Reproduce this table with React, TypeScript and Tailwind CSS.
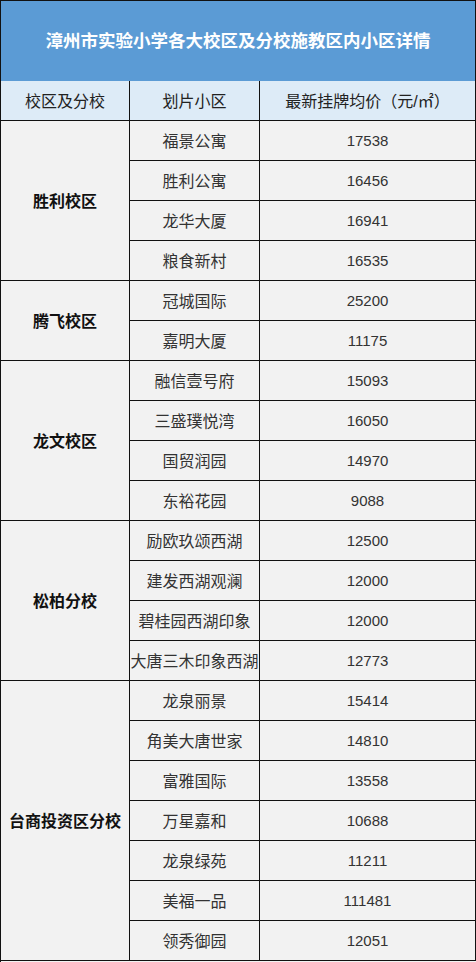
import React from 'react';

type Group = { campus: string; rows: [string, string][] };

const groups: Group[] = [
  {
    campus: '胜利校区',
    rows: [
      ['福景公寓', '17538'],
      ['胜利公寓', '16456'],
      ['龙华大厦', '16941'],
      ['粮食新村', '16535'],
    ],
  },
  {
    campus: '腾飞校区',
    rows: [
      ['冠城国际', '25200'],
      ['嘉明大厦', '11175'],
    ],
  },
  {
    campus: '龙文校区',
    rows: [
      ['融信壹号府', '15093'],
      ['三盛璞悦湾', '16050'],
      ['国贸润园', '14970'],
      ['东裕花园', '9088'],
    ],
  },
  {
    campus: '松柏分校',
    rows: [
      ['励欧玖颂西湖', '12500'],
      ['建发西湖观澜', '12000'],
      ['碧桂园西湖印象', '12000'],
      ['大唐三木印象西湖', '12773'],
    ],
  },
  {
    campus: '台商投资区分校',
    rows: [
      ['龙泉丽景', '15414'],
      ['角美大唐世家', '14810'],
      ['富雅国际', '13558'],
      ['万星嘉和', '10688'],
      ['龙泉绿苑', '11211'],
      ['美福一品', '111481'],
      ['领秀御园', '12051'],
    ],
  },
];

const spanClass: Record<number, string> = {
  2: 'row-span-2',
  4: 'row-span-4',
  7: 'row-span-7',
};

const font = { fontFamily: '"Liberation Sans", "Noto Sans CJK SC", sans-serif' };

export default function App() {
  return (
    <div className="w-[476px] h-[962px] bg-[#f2f2f2] border-l border-t border-[#111]" style={font}>
      {/* Title */}
      <div className="h-[80px] bg-[#5b9bd5] border-r border-[#111] flex items-center justify-center pt-[1px]">
        <h1 className="text-white font-bold text-[17.5px]">
          漳州市实验小学各大校区及分校施教区内小区详情
        </h1>
      </div>

      <div className="grid grid-cols-[129px_130px_216px] auto-rows-[40px]">
        {/* Header row */}
        <div className="bg-[#ddebf7] border-r border-b border-[#111] flex items-center justify-center pt-[2px] text-[16px] text-[#222]">
          校区及分校
        </div>
        <div className="bg-[#ddebf7] border-r border-b border-[#111] flex items-center justify-center pt-[2px] text-[16px] text-[#222]">
          划片小区
        </div>
        <div className="bg-[#ddebf7] border-r border-b border-[#111] flex items-center justify-center pt-[2px] text-[16px] text-[#222]">
          最新挂牌均价（元/㎡）
        </div>

        {groups.map((g) => (
          <React.Fragment key={g.campus}>
            <div
              className={`${spanClass[g.rows.length]} col-start-1 border-r border-b border-[#111] flex items-center justify-center pt-[2px] font-bold text-[16px] text-[#111]`}
            >
              {g.campus}
            </div>
            {g.rows.map(([name, price]) => (
              <React.Fragment key={name}>
                <div className="col-start-2 border-r border-b border-[#111] flex items-center justify-center pt-[2px] text-[16px] text-[#333]">
                  {name}
                </div>
                <div className="col-start-3 border-r border-b border-[#111] flex items-center justify-center pt-[2px] text-[15px] text-[#333]">
                  {price}
                </div>
              </React.Fragment>
            ))}
          </React.Fragment>
        ))}
      </div>
    </div>
  );
}
